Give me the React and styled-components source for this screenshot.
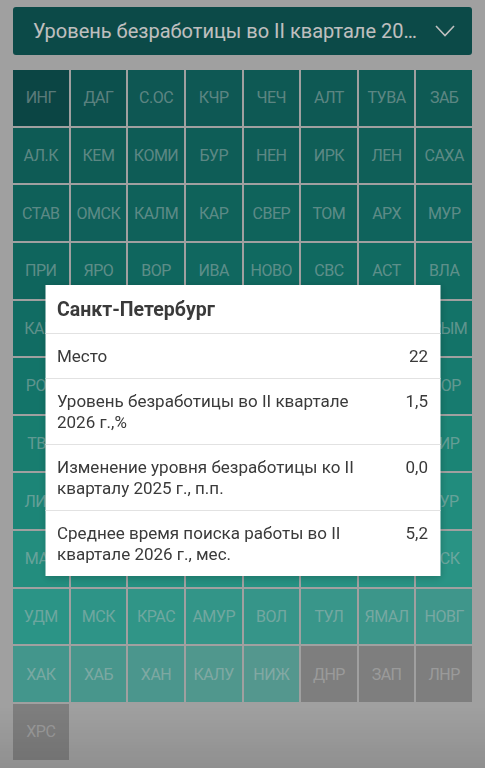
import React from 'react';
import styled, { createGlobalStyle } from 'styled-components';

// регионы в порядке рейтинга; для последних данных нет
const regions = [
  'ИНГ', 'ДАГ', 'С.ОС', 'КЧР', 'ЧЕЧ', 'АЛТ', 'ТУВА', 'ЗАБ',
  'АЛ.К', 'КЕМ', 'КОМИ', 'БУР', 'НЕН', 'ИРК', 'ЛЕН', 'САХА',
  'СТАВ', 'ОМСК', 'КАЛМ', 'КАР', 'СВЕР', 'ТОМ', 'АРХ', 'МУР',
  'ПРИ', 'ЯРО', 'ВОР', 'ИВА', 'НОВО', 'СВС', 'АСТ', 'ВЛА',
  'КАМ', 'ОРЕН', 'ПЕН', 'МАРИ', 'ЧУВ', 'БАШ', 'САМ', 'КРЫМ',
  'РОС', 'ТАТ', 'КОС', 'ПЕР', 'ЧЕЛ', 'ТЮМ', 'СМОЛ', 'МОР',
  'ТВЕ', 'БРЯН', 'ВОЛГ', 'ОРЛ', 'РЯЗ', 'БЕЛ', 'САР', 'КИР',
  'ЛИП', 'АДЫГ', 'ТАМБ', 'УЛЬЯ', 'ХМАО', 'КБР', 'СПБ', 'КУР',
  'МАГ', 'ЕАО', 'ЧУК', 'КЛД', 'СЕВ', 'ЛО', 'НАО', 'ПСК',
  'УДМ', 'МСК', 'КРАС', 'АМУР', 'ВОЛ', 'ТУЛ', 'ЯМАЛ', 'НОВГ',
  'ХАК', 'ХАБ', 'ХАН', 'КАЛУ', 'НИЖ',
];
const noData = ['ДНР', 'ЗАП', 'ЛНР', 'ХРС'];

const stops = [
  [0, [15, 93, 91]],
  [0.02, [19, 117, 111]],
  [0.1, [19, 122, 114]],
  [0.3, [21, 136, 125]],
  [0.5, [27, 158, 142]],
  [0.7, [40, 182, 162]],
  [0.85, [56, 198, 178]],
  [0.93, [80, 200, 185]],
  [1, [112, 202, 190]],
];

const colorAt = (t) => {
  for (let i = 1; i < stops.length; i++) {
    const [t1, c1] = stops[i];
    const [t0, c0] = stops[i - 1];
    if (t <= t1) {
      const k = (t - t0) / (t1 - t0);
      const c = c0.map((v, j) => Math.round(v + (c1[j] - v) * k));
      return `rgb(${c.join(',')})`;
    }
  }
  return 'rgb(112,202,190)';
};

const details = [
  { label: 'Место', value: '22' },
  { label: 'Уровень безработицы во II квартале 2026 г.,%', value: '1,5' },
  { label: 'Изменение уровня безработицы ко II кварталу 2025 г., п.п.', value: '0,0' },
  { label: 'Среднее время поиска работы во II квартале 2026 г., мес.', value: '5,2' },
];

const GlobalStyle = createGlobalStyle`
  body {
    margin: 0;
    background: #d6d6d6;
    font-family: Roboto, "Liberation Sans", sans-serif;
  }
`;

export default function App() {
  return (
    <>
      <GlobalStyle />
      <Page>
        <Select>
          <SelectText>Уровень безработицы во II квартале 2026 г.,%</SelectText>
          <svg width="20" height="12" viewBox="0 0 20 12" fill="none">
            <polyline points="1,1 10,10.5 19,1" stroke="#fff" strokeWidth="1.6" />
          </svg>
        </Select>
        <Grid>
          {regions.map((name, i) => (
            <Cell key={name} bg={colorAt(i / (regions.length - 1))}>{name}</Cell>
          ))}
          {noData.map((name) => (
            <Cell key={name} bg="#a9a9a9">{name}</Cell>
          ))}
        </Grid>
      </Page>
      <Overlay>
        <Modal>
          <ModalTitle>Санкт-Петербург</ModalTitle>
          {details.map((d) => (
            <Row key={d.label}>
              <Label>{d.label}</Label>
              <Value>{d.value}</Value>
            </Row>
          ))}
        </Modal>
      </Overlay>
    </>
  );
}

const Page = styled.div`
  padding: 7px 13px;
`;

const Select = styled.div`
  height: 48px;
  display: flex;
  align-items: center;
  gap: 16px;
  padding: 0 17px 0 20px;
  background: #106360;
  border-radius: 3px;
`;

const SelectText = styled.div`
  flex: 1;
  min-width: 0;
  white-space: nowrap;
  overflow: hidden;
  text-overflow: ellipsis;
  color: #fff;
  font-size: 20px;
`;

const Grid = styled.div`
  margin-top: 15px;
  display: grid;
  grid-template-columns: repeat(8, 1fr);
  gap: 2px;
`;

const Cell = styled.div`
  aspect-ratio: 1;
  display: flex;
  align-items: center;
  justify-content: center;
  background: ${(props) => props.bg};
  color: rgba(255, 255, 255, 0.45);
  font-size: 16px;
  letter-spacing: -0.5px;
`;

const Overlay = styled.div`
  position: fixed;
  inset: 0;
  background: linear-gradient(to bottom, rgba(0, 0, 0, 0.25) 92%, rgba(0, 0, 0, 0.33));
`;

const Modal = styled.div`
  position: absolute;
  top: 285px;
  left: 50%;
  transform: translateX(-50%);
  width: 395px;
  background: #fff;
  box-shadow: 0 2px 8px rgba(0, 0, 0, 0.2);
  color: #3a3a3a;
`;

const ModalTitle = styled.div`
  padding: 12px 12px 11px;
  font-size: 19.5px;
  line-height: 25px;
  font-weight: 700;
  border-bottom: 1px solid #e2e2e2;
`;

const Row = styled.div`
  display: flex;
  align-items: flex-start;
  gap: 24px;
  padding: 12px 12px 11px;
  font-size: 17px;
  line-height: 21px;
  border-bottom: 1px solid #e2e2e2;

  &:last-child {
    border-bottom: none;
  }
`;

const Label = styled.div`
  flex: 1;
`;

const Value = styled.div`
  text-align: right;
`;
